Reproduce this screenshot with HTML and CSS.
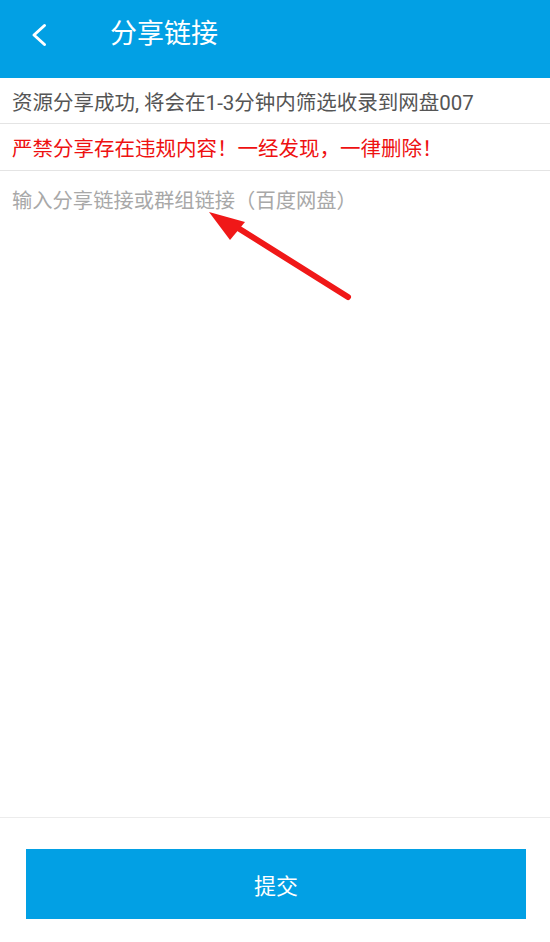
FILE: index.html
```html
<!DOCTYPE html>
<html lang="zh-CN">
<head>
<meta charset="utf-8">
<title>分享链接</title>
<link rel="stylesheet" href="styles.css">
</head>
<body>
<div class="page">
  <header class="topbar">
    <span class="back">
      <svg width="16" height="24" viewBox="0 0 16 24"><path d="M13.5 2.5 L3 12 L13.5 21.5" fill="none" stroke="#fff" stroke-width="3" stroke-linecap="round" stroke-linejoin="round"/></svg>
    </span>
    <h1 class="title">分享链接</h1>
  </header>
  <div class="row info">资源分享成功, 将会在1-3分钟内筛选收录到网盘007</div>
  <div class="row warn">严禁分享存在违规内容！一经发现，一律删除！</div>
  <div class="editor">
    <div class="placeholder">输入分享链接或群组链接（百度网盘）</div>
    <svg class="arrow" width="160" height="110" viewBox="0 0 160 110">
      <line x1="148" y1="98" x2="30" y2="24" stroke="#f01818" stroke-width="6" stroke-linecap="round"/>
      <polygon points="9,13 30,41 45,23" fill="#f01818"/>
    </svg>
  </div>
  <footer class="footer">
    <button class="submit">提交</button>
  </footer>
</div>
</body>
</html>
```
FILE: styles.css
```css
* { box-sizing: border-box; }
html, body { margin: 0; padding: 0; }
body {
  font-family: Roboto, "Noto Sans CJK SC", sans-serif;
  background: #fff;
}
.page {
  width: 550px;
  height: 942px;
  display: flex;
  flex-direction: column;
}
.topbar {
  height: 78px;
  background: #02a0e4;
  display: flex;
  align-items: center;
  flex-shrink: 0;
}
.back {
  width: 110px;
  padding-left: 31px;
  padding-bottom: 8px;
  display: flex;
  align-items: center;
}
.title {
  margin: 0;
  font-size: 27px;
  font-weight: normal;
  color: #fff;
  line-height: 1;
  padding-bottom: 10px;
}
.row {
  height: 47px;
  border-bottom: 1px solid #e4e4e4;
  display: flex;
  align-items: center;
  padding-left: 12px;
  font-size: 20.5px;
  flex-shrink: 0;
}
.row.info { height: 46px; color: #555; }
.row.warn { color: #ee1111; }
.editor {
  flex: 1;
  position: relative;
  padding: 16px 12px 0;
  border-bottom: 1px solid #ececec;
}
.placeholder {
  font-size: 20.3px;
  color: #a8a8a8;
  line-height: 28px;
}
.arrow {
  position: absolute;
  left: 200px;
  top: 28px;
}
.footer {
  height: 124px;
  flex-shrink: 0;
  padding: 31px 24px 0 26px;
}
.submit {
  width: 500px;
  height: 70px;
  border: none;
  background: #02a0e4;
  color: #fff;
  font-family: Roboto, "Noto Sans CJK SC", sans-serif;
  font-size: 22px;
  padding: 0;
  display: block;
}
```
